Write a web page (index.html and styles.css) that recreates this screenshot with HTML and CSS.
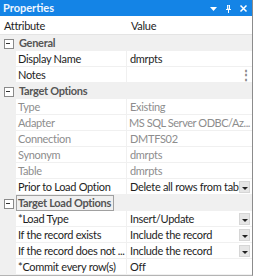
FILE: index.html
```html
<!DOCTYPE html>
<html>
<head>
<meta charset="utf-8">
<link rel="stylesheet" href="styles.css">
</head>
<body>
<div class="panel">
  <div class="titlebar">
    <span class="title">Properties</span>
    <span class="tools">
      <svg width="9" height="9" viewBox="0 0 9 9"><path d="M1 3h7L4.5 7z" fill="#fff"/></svg>
      <svg width="9" height="9" viewBox="0 0 9 9"><path d="M3 1h3v4h1v1H5v3H4V6H2V5h1z" fill="#fff"/><path d="M4.4 1.5v3.2" stroke="#1484e6" stroke-width="0.8"/></svg>
      <svg width="9" height="9" viewBox="0 0 9 9"><path d="M1.5 1.5l6 6M7.5 1.5l-6 6" stroke="#fff" stroke-width="1.5"/></svg>
    </span>
  </div>
  <div class="grid">
    <div class="header"><span class="hname">Attribute</span><span class="hval">Value</span></div>

    <div class="group"><span class="tog"></span><span class="glabel">General</span></div>
    <div class="row"><span class="gut"></span><span class="name">Display Name</span><span class="val">dmrpts</span></div>
    <div class="row"><span class="gut"></span><span class="name">Notes</span><span class="val"><span class="vt"></span><span class="dots">⋮</span></span></div>

    <div class="group"><span class="tog"></span><span class="glabel">Target Options</span></div>
    <div class="row dis"><span class="gut"></span><span class="name">Type</span><span class="val">Existing</span></div>
    <div class="row dis"><span class="gut"></span><span class="name">Adapter</span><span class="val tight">MS SQL Server ODBC/Az...</span></div>
    <div class="row dis"><span class="gut"></span><span class="name">Connection</span><span class="val">DMTFS02</span></div>
    <div class="row dis"><span class="gut"></span><span class="name">Synonym</span><span class="val">dmrpts</span></div>
    <div class="row dis"><span class="gut"></span><span class="name">Table</span><span class="val">dmrpts</span></div>
    <div class="row"><span class="gut"></span><span class="name">Prior to Load Option</span><span class="val"><span class="vt">Delete all rows from table</span><span class="dd"></span></span></div>

    <div class="group"><span class="tog"></span><span class="glabel focus">Target Load Options</span></div>
    <div class="row"><span class="gut"></span><span class="name">*Load Type</span><span class="val"><span class="vt">Insert/Update</span><span class="dd"></span></span></div>
    <div class="row"><span class="gut"></span><span class="name">If the record exists</span><span class="val"><span class="vt">Include the record</span><span class="dd"></span></span></div>
    <div class="row"><span class="gut"></span><span class="name">If the record does not ...</span><span class="val"><span class="vt">Include the record</span><span class="dd"></span></span></div>
    <div class="row"><span class="gut"></span><span class="name">*Commit every row(s)</span><span class="val">Off</span></div>
  </div>
</div>
</body>
</html>
```
FILE: styles.css
```css
* { box-sizing: border-box; }
html, body { margin: 0; padding: 0; background: #fff; }
body { font-family: Lato, "Noto Sans", sans-serif; font-size: 11px; letter-spacing: -0.3px; color: #1e1e1e; }
.panel { width: 253px; height: 276px; display: flex; flex-direction: column; border-right: 1px solid #8c8c8c; border-bottom: 1px solid #b4b4b4; overflow: hidden; background: #f0f0f0; }
.titlebar { height: 16px; background: #1484e6; color: #fff; display: flex; align-items: center; justify-content: space-between; padding: 0 4px 0 3px; flex: none; }
.title { font-weight: 700; font-size: 11px; line-height: 16px; color: #eef6ff; letter-spacing: 0; }
.tools { display: flex; gap: 6px; align-items: center; padding-top: 1px; }
.tools svg { display: block; }
.grid { display: flex; flex-direction: column; flex: 1; }
.header { height: 19px; background: #fff; display: flex; align-items: center; border-bottom: 1px solid #e4e4e4; }
.hname { width: 127px; padding-left: 4px; }
.hval { padding-left: 4px; }
.group, .row { height: 16px; display: flex; align-items: stretch; line-height: 15px; flex: none; }
.group { background: #f0f0f0; }
.tog { width: 16px; position: relative; flex: none; }
.tog::before { content: ""; position: absolute; left: 4px; top: 4px; width: 8px; height: 8px; border: 1px solid #8a8a8a; background: #fff; }
.tog::after { content: ""; position: absolute; left: 6px; top: 8px; width: 4px; height: 1px; background: #333; }
.glabel { font-weight: 700; color: #555; padding: 0 2px 0 2px; margin-left: 1px; }
.glabel.focus { border: 1px solid #a0a0a0; line-height: 13px; padding: 0 2px 0 1px; margin-left: 0; }
.gut { width: 16px; flex: none; background: #f0f0f0; }
.name, .val { background: #fff; border-bottom: 1px solid #f0f0f0; }
.name { width: 111px; flex: none; padding-left: 2px; white-space: nowrap; overflow: hidden; border-right: 1px solid #f0f0f0; }
.val { flex: 1; padding-left: 3px; display: flex; white-space: nowrap; overflow: hidden; }
.val.tight { letter-spacing: -0.45px; padding-left: 2px; }
.vt { flex: 1; overflow: hidden; white-space: nowrap; }
.dis .name, .dis .val { color: #8d8d8d; }
.dd { width: 11px; flex: none; margin: 2px 2px 1px 0; background: #e6e6e6; border: 1px solid #d6d6d6; position: relative; }
.dd::after { content: ""; position: absolute; left: 2px; top: 5px; border-left: 3px solid transparent; border-right: 3px solid transparent; border-top: 3px solid #222; }
.dots { width: 10px; color: #888; font-size: 12px; font-weight: 700; text-align: center; flex: none; margin-right: 2px; }
```
